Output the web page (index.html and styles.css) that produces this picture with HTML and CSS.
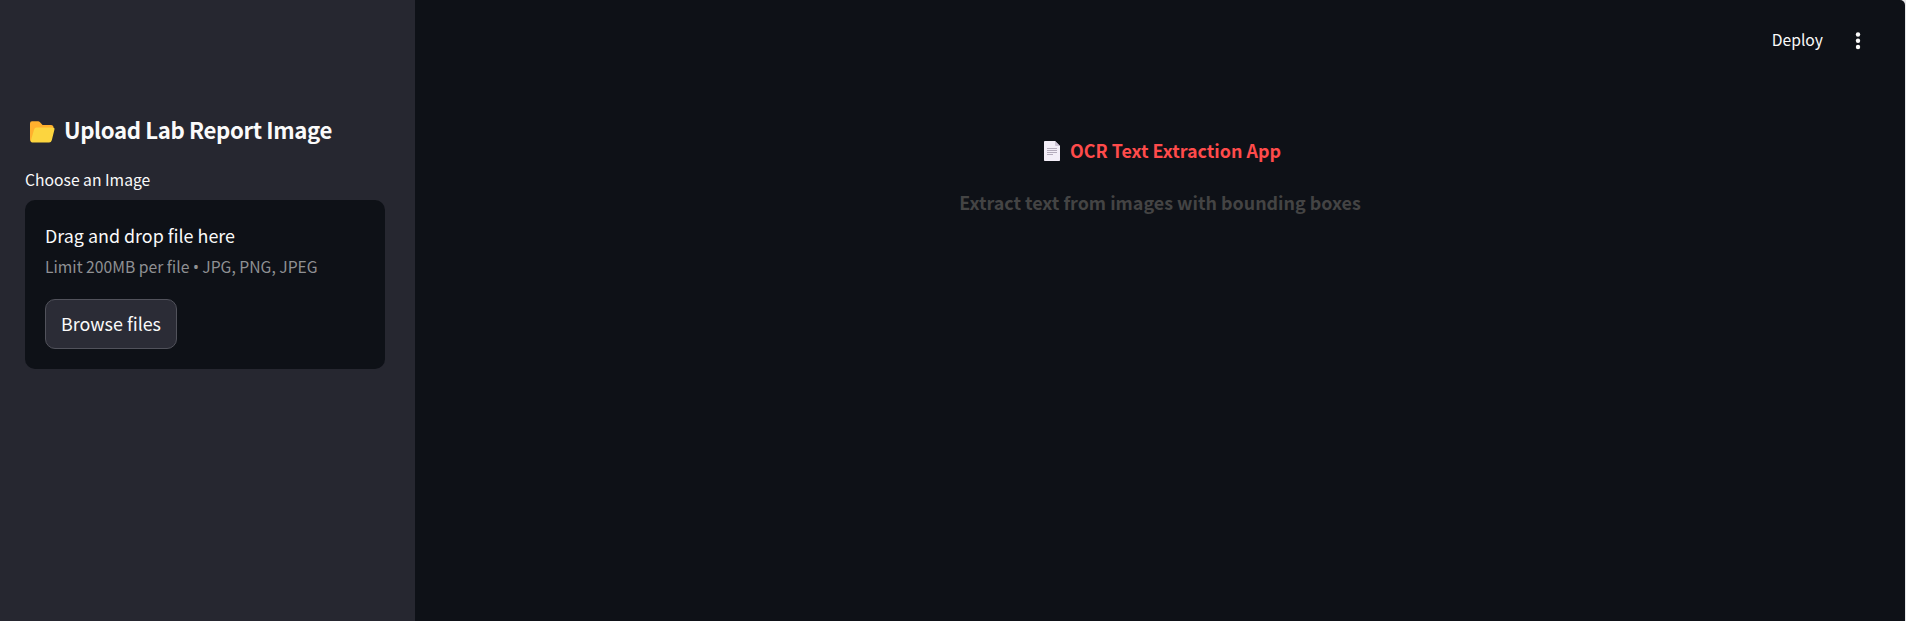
FILE: index.html
```html
<!DOCTYPE html>
<html lang="en">
<head>
<meta charset="utf-8">
<title>OCR Text Extraction App</title>
<link rel="stylesheet" href="styles.css">
</head>
<body>
<div class="app">
  <aside class="sidebar">
    <h2 class="sidebar-title">
      <svg class="folder" viewBox="0 0 26 22" width="26" height="22" aria-hidden="true">
        <path fill="#ffb02e" d="M1 2.500Q1 .3 3 .3h6q1.200 0 2 .9l2.600 2.700h8.400q2.500 0 2.500 2.500L20 21H3.500A2.500 2.500 0 0 1 1 18.500z"/>
        <path fill="#fcd53f" d="M7.800 6.500h15.700q2.500 0 1.900 2.300l-2.600 10.500q-.6 2.200-2.700 2.200H3.200q-1.800-.2-1.300-2.100l3.100-10.600q.6-2.300 2.800-2.300z"/>
      </svg>
      <span class="sidebar-title-text">Upload Lab Report Image</span>
    </h2>
    <label class="label"><span>Choose an Image</span></label>
    <section class="dropzone">
      <div class="drop-title"><span>Drag and drop file here</span></div>
      <div class="drop-hint">Limit 200MB per file <span class="bullet">•</span> JPG, PNG, JPEG</div>
      <button class="browse" type="button">Browse files</button>
    </section>
  </aside>
  <main class="main">
    <header class="toolbar">
      <span class="deploy">Deploy</span>
      <svg class="dots" viewBox="0 0 6 18" width="6" height="18" fill="#fafafa" aria-hidden="true">
        <circle cx="3" cy="2.500" r="2.200"/><circle cx="3" cy="8.700" r="2.200"/><circle cx="3" cy="15" r="2.200"/>
      </svg>
    </header>
    <div class="content">
      <h1 class="title">
        <svg class="page" viewBox="0 0 16 20" width="16" height="20" aria-hidden="true">
          <path fill="#f3eef8" d="M0 .8Q0 0 .8 0H11l5 5v14.200q0 .8-.8.800H.8Q0 20 0 19.200z"/>
          <path fill="#cdc4d6" d="M11 0l5 5h-4q-1 0-1-1z"/>
          <path stroke="#b4acbc" d="M3 7.500h10M3 9.500h10M3 11.500h10M3 13.500h6"/>
        </svg>
        <span class="title-text">OCR Text Extraction App</span>
      </h1>
      <h3 class="subtitle">Extract text from images with bounding boxes</h3>
    </div>
  </main>
</div>
</body>
</html>
```
FILE: styles.css
```css
* { box-sizing: border-box; }
body {
  margin: 0;
  background: #e6e7e9;
  color: #fafafa;
  font-family: "Noto Sans CJK SC", "Noto Sans", sans-serif;
}
h1, h2, h3 { margin: 0; }
svg { display: block; flex: none; }
.app {
  display: flex;
  width: calc(100vw - 1px);
  height: 100vh;
  overflow: hidden;
  background: #0e1117;
  border-top-right-radius: 5px;
  white-space: nowrap;
}
.sidebar {
  width: 415px;
  flex: none;
  padding: 114px 30px 0 25px;
  background: #262730;
}
.sidebar-title {
  display: flex;
  align-items: center;
  gap: 9px;
  height: 30px;
  padding-left: 4px;
  margin-bottom: 21px;
  font-size: 22.2px;
  font-weight: 600;
  line-height: 31px;
  letter-spacing: -0.38px;
}
.folder { margin-top: 5px; }
.label {
  display: block;
  margin-bottom: 5px;
  font-size: 15.7px;
  line-height: 30px;
}
.dropzone {
  height: 169px;
  padding: 20px;
  border-radius: 10px;
  background: #0e1117;
}
.drop-title { font-size: 17.9px; line-height: 30px; }
.drop-hint {
  margin-bottom: 15px;
  color: #8f9093;
  font-size: 15.7px;
  line-height: 34px;
}
.bullet { font-family: "Noto Sans", sans-serif; line-height: 1; }
.browse {
  display: block;
  width: 132px;
  height: 50px;
  padding: 0 0 2px;
  border: 1px solid #51525b;
  border-radius: 10px;
  background: #2b2c36;
  color: #fafafa;
  font: 17.9px/46px "Noto Sans CJK SC", sans-serif;
}
.main { flex: 1; }
.toolbar {
  display: flex;
  justify-content: flex-end;
  align-items: center;
  gap: 32px;
  height: 78px;
  padding-right: 44px;
}
.deploy { padding-top: 2px; font-size: 15.7px; line-height: 30px; }
.dots { margin-top: 3px; }
.content {
  display: flex;
  flex-direction: column;
  align-items: center;
  padding-top: 60px;
}
.title, .subtitle {
  height: 24px;
  font-size: 17.9px;
  font-weight: 700;
  line-height: 24px;
}
.title {
  display: flex;
  align-items: center;
  gap: 10px;
  margin-bottom: 28px;
  padding-left: 5px;
  color: #ff4b4b;
}
.page { margin-top: 2px; }
.subtitle { color: #444; }
```
